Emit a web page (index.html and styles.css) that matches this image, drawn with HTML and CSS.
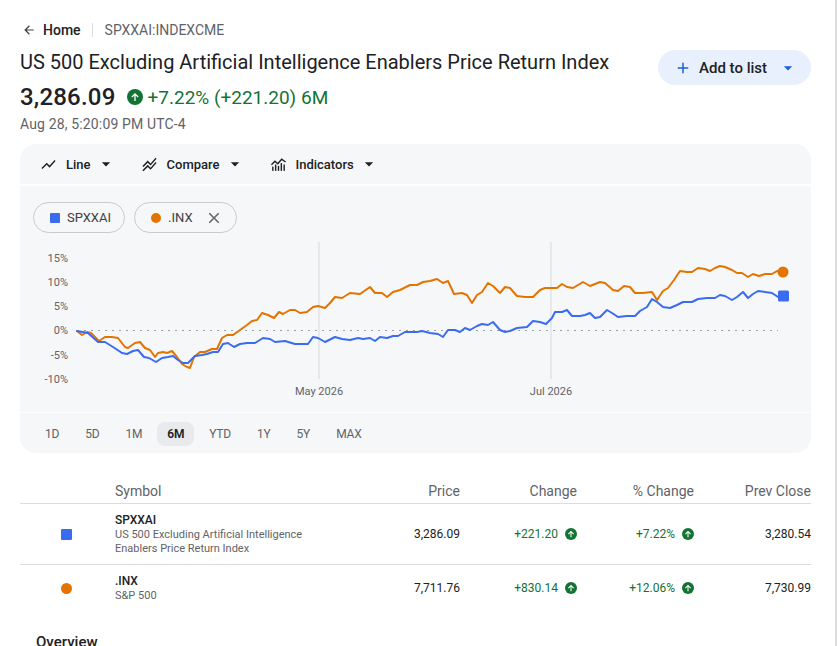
FILE: index.html
```html
<!DOCTYPE html>
<html lang="en">
<head>
<meta charset="utf-8">
<title>SPXXAI:INDEXCME</title>
<link rel="stylesheet" href="styles.css">
</head>
<body>
<div class="page">
  <nav class="crumbs">
    <svg class="crumb-back" viewBox="0 0 24 24" width="14" height="14"><path d="M20 11H7.83l5.59-5.59L12 4l-8 8 8 8 1.41-1.41L7.83 13H20v-2z"/></svg>
    <span class="crumb-home">Home</span>
    <span class="crumb-sep"></span>
    <span class="crumb-ticker">SPXXAI:INDEXCME</span>
  </nav>

  <header class="head">
    <div class="head-main">
      <h1 class="title">US 500 Excluding Artificial Intelligence Enablers Price Return Index</h1>
      <div class="quote">
        <span class="price">3,286.09</span>
        <span class="delta">
          <svg class="up-big" viewBox="0 0 16 16" width="16" height="16"><circle cx="8" cy="8" r="8" fill="#137333"/><path d="M8 4l3.6 3.6-.9.9L8.65 6.45V12h-1.3V6.45L5.3 8.5l-.9-.9z" fill="#fff"/></svg>
          +7.22% (+221.20) 6M
        </span>
      </div>
      <div class="stamp">Aug 28, 5:20:09 PM UTC-4</div>
    </div>
    <button class="add-btn">
      <svg viewBox="0 0 24 24" width="18" height="18"><path d="M19 13h-6v6h-2v-6H5v-2h6V5h2v6h6v2z" fill="#1a5fd6"/></svg>
      <span>Add to list</span>
      <svg viewBox="0 0 24 24" width="20" height="20"><path d="M7 10l5 5 5-5z" fill="#1a5fd6"/></svg>
    </button>
  </header>

  <section class="chart-card">
    <div class="toolbar">
      <div class="tool">
        <svg viewBox="0 0 24 24" width="17" height="17"><path d="M3.5 18.49l6-6.01 4 4L22 6.92l-1.41-1.41-7.09 7.97-4-4L2 16.99z"/></svg>
        <span>Line</span>
        <svg class="caret" viewBox="0 0 24 24" width="20" height="20"><path d="M7 10l5 5 5-5z"/></svg>
      </div>
      <div class="tool">
        <svg viewBox="0 0 24 24" width="17" height="17"><path d="M2 19.99l7.5-7.51 4 4 7.09-7.97L22 9.92l-8.5 9.56-4-4-6 6.01L2 19.99zM3.5 15.49l6-6.01 4 4L22 3.92l-1.41-1.41-7.09 7.97-4-4L2 13.99l1.5 1.5z"/></svg>
        <span>Compare</span>
        <svg class="caret" viewBox="0 0 24 24" width="20" height="20"><path d="M7 10l5 5 5-5z"/></svg>
      </div>
      <div class="tool">
        <svg viewBox="0 0 24 24" width="17" height="17"><path d="M2 12.5l5-5 4 3.5 5.5-6.5 5.5 4" fill="none" stroke="#202124" stroke-width="2"/><rect x="3" y="15" width="2" height="6"/><rect x="7" y="12" width="2" height="9"/><rect x="11" y="14" width="2" height="7"/><rect x="15" y="10" width="2" height="11"/><rect x="19" y="12" width="2" height="9"/></svg>
        <span>Indicators</span>
        <svg class="caret" viewBox="0 0 24 24" width="20" height="20"><path d="M7 10l5 5 5-5z"/></svg>
      </div>
    </div>

    <div class="plot">
      <div class="chips">
        <div class="chip"><span class="sw-square"></span><span>SPXXAI</span></div>
        <div class="chip"><span class="sw-dot"></span><span>.INX</span>
          <svg class="chip-x" viewBox="0 0 24 24" width="18" height="18"><path d="M19 6.41L17.59 5 12 10.59 6.41 5 5 6.41 10.59 12 5 17.59 6.41 19 12 13.41 17.59 19 19 17.59 13.41 12z"/></svg>
        </div>
      </div>
      <svg class="graph" viewBox="20 233 791 179" width="791" height="179">
        <g class="ylab">
          <text x="68" y="262">15%</text>
          <text x="68" y="286">10%</text>
          <text x="68" y="310">5%</text>
          <text x="68" y="334">0%</text>
          <text x="68" y="359">-5%</text>
          <text x="68" y="383">-10%</text>
        </g>
        <line x1="319" y1="242" x2="319" y2="379" class="vgrid"/>
        <line x1="551" y1="242" x2="551" y2="379" class="vgrid"/>
        <g class="xlab">
          <text x="319" y="395">May 2026</text>
          <text x="551" y="395">Jul 2026</text>
        </g>
        <line x1="77" y1="330.5" x2="778" y2="330.5" class="zero"/>
        <polyline class="ln-orange" points="77,331 82,335 87,332 91,333 99,341 105,337 112,337 118,338 125,347 128,348 135,343 140,342 145,348 150,350 155,357 158,353 163,352 167,353 172,351 177,357 182,364 187,367 190,368 194,357 200,352 205,352 212,349 217,349 222,338 227,335 233,335 240,330 247,325 252,321 257,320 262,313 268,315 274,318 279,312 283,314 290,310 295,310 300,313 307,312 313,307 318,306 325,308 330,303 335,297 342,298 350,293 360,294 370,287 375,293 382,293 387,297 393,292 400,290 410,285 417,285 423,282 430,281 437,279 443,283 448,281 454,294 462,293 467,295 472,303 477,295 482,292 488,283 493,286 500,293 505,287 510,288 517,296 525,297 533,297 540,290 545,288 552,288 557,288 562,284 567,287 573,288 583,282 590,286 600,282 605,283 613,290 618,291 624,286 630,287 635,293 643,293 652,292 657,300 663,291 668,288 674,280 680,271 687,272 692,272 698,268 705,269 710,271 715,268 720,266 725,267 732,270 737,273 742,273 748,277 753,274 759,276 765,274 772,274 777,271 783,272"/>
        <polyline class="ln-blue" points="77,331 88,333 98,342 105,342 113,347 122,353 127,354 133,351 138,350 144,357 149,358 156,362 162,358 168,357 173,356 178,360 183,363 188,363 195,356 202,355 207,354 213,352 218,352 223,344 228,343 234,347 240,344 247,343 255,343 263,338 270,339 275,342 285,341 295,344 308,344 313,337 318,338 325,342 335,337 342,339 350,340 358,338 363,339 370,338 375,341 380,337 387,338 393,336 398,336 405,332 417,332 422,331 430,333 438,334 443,337 448,330 455,330 460,332 465,328 470,330 477,326 482,324 488,325 493,322 500,330 505,332 510,331 517,328 527,327 533,321 540,322 546,324 552,318 555,312 562,312 567,310 572,316 580,316 585,315 590,313 595,318 600,317 607,310 612,313 618,317 627,316 635,316 640,311 647,307 652,299 657,302 663,307 670,308 677,305 683,302 692,302 698,299 707,298 715,298 720,295 725,296 732,300 737,297 743,292 748,298 753,294 758,291 765,292 772,293 778,297 783,296"/>
        <circle cx="783" cy="272" r="5.5" fill="#e37400"/>
        <rect x="778" y="290.5" width="11" height="11" rx="1.5" fill="#3b6cf0"/>
      </svg>
    </div>

    <div class="ranges">
      <span class="range">1D</span>
      <span class="range">5D</span>
      <span class="range">1M</span>
      <span class="range is-on">6M</span>
      <span class="range">YTD</span>
      <span class="range">1Y</span>
      <span class="range">5Y</span>
      <span class="range">MAX</span>
    </div>
  </section>

  <section class="table">
    <div class="trow thead">
      <div></div>
      <div class="c-sym">Symbol</div>
      <div class="c-num">Price</div>
      <div class="c-num">Change</div>
      <div class="c-num">% Change</div>
      <div class="c-num">Prev Close</div>
    </div>
    <div class="trow tbody">
      <div class="c-sw"><span class="tsw-square"></span></div>
      <div class="c-sym">
        <div class="sym-name">SPXXAI</div>
        <div class="sym-desc">US 500 Excluding Artificial Intelligence Enablers Price Return Index</div>
      </div>
      <div class="c-num">3,286.09</div>
      <div class="c-num pos">+221.20 <svg class="up" viewBox="0 0 16 16" width="12" height="12"><circle cx="8" cy="8" r="8" fill="#137333"/><path d="M8 3.6l4 4-1 1-2.3-2.3V12.4H7.3V6.3L5 8.6l-1-1z" fill="#fff"/></svg></div>
      <div class="c-num pos">+7.22% <svg class="up" viewBox="0 0 16 16" width="12" height="12"><circle cx="8" cy="8" r="8" fill="#137333"/><path d="M8 3.6l4 4-1 1-2.3-2.3V12.4H7.3V6.3L5 8.6l-1-1z" fill="#fff"/></svg></div>
      <div class="c-num">3,280.54</div>
    </div>
    <div class="trow tbody last">
      <div class="c-sw"><span class="tsw-dot"></span></div>
      <div class="c-sym">
        <div class="sym-name">.INX</div>
        <div class="sym-desc">S&amp;P 500</div>
      </div>
      <div class="c-num">7,711.76</div>
      <div class="c-num pos">+830.14 <svg class="up" viewBox="0 0 16 16" width="12" height="12"><circle cx="8" cy="8" r="8" fill="#137333"/><path d="M8 3.6l4 4-1 1-2.3-2.3V12.4H7.3V6.3L5 8.6l-1-1z" fill="#fff"/></svg></div>
      <div class="c-num pos">+12.06% <svg class="up" viewBox="0 0 16 16" width="12" height="12"><circle cx="8" cy="8" r="8" fill="#137333"/><path d="M8 3.6l4 4-1 1-2.3-2.3V12.4H7.3V6.3L5 8.6l-1-1z" fill="#fff"/></svg></div>
      <div class="c-num">7,730.99</div>
    </div>
  </section>

  <h2 class="overview">Overview</h2>
</div>
</body>
</html>
```

FILE: styles.css
```css
* { box-sizing: border-box; }
html, body { margin: 0; padding: 0; background: #fff; }
body {
  font-family: Roboto, "Liberation Sans", Arial, sans-serif;
  color: #202124;
  overflow: hidden;
  height: 646px;
}
.page {
  width: 837px;
  min-height: 646px;
  border-right: 2px solid #dadce0;
  padding: 20px 24px 0 20px;
}

/* breadcrumb */
.crumbs {
  display: flex;
  align-items: center;
  height: 20px;
  font-size: 14px;
  line-height: 20px;
}
.crumb-back { fill: #3c4043; margin-left: 2px; margin-right: 7px; }
.crumb-home { font-weight: 500; color: #202124; }
.crumb-sep {
  width: 1px; height: 14px; background: #dadce0;
  margin: 0 12px 0 11px;
}
.crumb-ticker { color: #5f6368; }

/* header */
.head {
  display: flex;
  justify-content: space-between;
  align-items: flex-start;
  margin-top: 8px;
}
.title {
  margin: 0;
  font-size: 20px;
  line-height: 28px;
  font-weight: 400;
  color: #202124;
}
.quote {
  display: flex;
  align-items: center;
  margin-top: 6px;
  height: 30px;
}
.price { font-size: 24px; font-weight: 500; letter-spacing: 0.2px; }
.delta {
  display: flex; align-items: center; gap: 4px;
  margin-left: 12px;
  font-size: 19px;
  color: #137333;
}
.stamp {
  margin-top: 3px;
  font-size: 14px;
  line-height: 18px;
  letter-spacing: 0.15px;
  color: #5f6368;
}
.add-btn {
  display: flex;
  align-items: center;
  margin-top: 2px;
  height: 35px;
  width: 153px;
  padding: 0 0 0 16px;
  border: none;
  border-radius: 18px;
  background: #e8effd;
  font-family: inherit;
  font-size: 15px;
  font-weight: 500;
  color: #202124;
}
.add-btn span { margin: 0 11px 0 7px; }

/* chart card */
.chart-card { margin-top: 11px; }
.toolbar {
  display: flex;
  align-items: center;
  gap: 25px;
  height: 40px;
  padding-left: 20px;
  background: #f6f7f9;
  border-radius: 16px 16px 0 0;
}
.tool {
  display: flex;
  align-items: center;
  font-size: 13px;
  font-weight: 500;
  color: #202124;
}
.tool svg { fill: #202124; }
.tool span { margin-left: 9px; margin-right: 5px; }
.plot {
  margin-top: 2px;
  background: #f6f7f9;
  padding-top: 16px;
}
.chips {
  display: flex;
  gap: 9px;
  padding-left: 13px;
  height: 31px;
}
.chip {
  display: flex;
  align-items: center;
  height: 31px;
  padding: 0 13px 0 16px;
  border: 1px solid #c8cacf;
  border-radius: 16px;
  font-size: 13px;
  color: #3c4043;
}
.sw-square { width: 10px; height: 10px; background: #3b6cf0; border-radius: 1px; margin-right: 7px; }
.sw-dot { width: 10px; height: 10px; background: #e37400; border-radius: 50%; margin-right: 7px; }
.chip-x { fill: #5f6368; margin-left: 12px; }
.graph { display: block; }
.ylab text { font-size: 11px; fill: #5f6368; text-anchor: end; font-family: Roboto, sans-serif; }
.xlab text { font-size: 11px; fill: #5f6368; text-anchor: middle; font-family: Roboto, sans-serif; }
.vgrid { stroke: #e1e3e6; stroke-width: 1.5; }
.zero { stroke: #9aa0a6; stroke-width: 1; stroke-dasharray: 2 5; }
.ln-orange, .ln-blue { fill: none; stroke-width: 2; stroke-linejoin: round; stroke-linecap: round; }
.ln-orange { stroke: #e37400; }
.ln-blue { stroke: #3b6cf0; }

.ranges {
  display: flex;
  align-items: center;
  gap: 4px;
  height: 40px;
  margin-top: 1px;
  padding-left: 14px;
  padding-top: 1px;
  background: #f6f7f9;
  border-radius: 0 0 16px 16px;
}
.range {
  display: flex;
  align-items: center;
  justify-content: center;
  height: 24px;
  padding: 0 11px;
  border-radius: 8px;
  font-size: 12px;
  letter-spacing: -0.2px;
  color: #5f6368;
}
.range.is-on { background: #e8eaed; color: #202124; font-weight: 600; padding: 0 10px; }

/* table */
.table { margin-top: 18px; }
.trow {
  display: grid;
  grid-template-columns: 95px 230px 115px 117px 117px 117px;
  align-items: center;
}
.thead {
  height: 33px;
  padding-top: 7px;
  border-bottom: 1px solid #dadce0;
  font-size: 14px;
  color: #5f6368;
}
.tbody {
  padding: 8px 0 8px;
  border-bottom: 1px solid #dadce0;
  font-size: 12px;
}
.tbody.last { border-bottom: none; }
.c-num { display: flex; justify-content: flex-end; align-items: center; gap: 7px; }
.c-sw { display: flex; justify-content: center; padding-right: 2px; }
.tsw-square { width: 11px; height: 11px; background: #3b6cf0; border-radius: 1px; }
.tsw-dot { width: 11px; height: 11px; background: #e37400; border-radius: 50%; }
.sym-name { font-size: 12px; line-height: 16px; font-weight: 500; color: #202124; }
.sym-desc { font-size: 11px; line-height: 14px; color: #5f6368; max-width: 200px; }
.pos { color: #137333; }
.up { flex: none; }
.overview {
  margin: 21px 0 0 16px;
  font-size: 15px;
  line-height: 20px;
  font-weight: 500;
  color: #202124;
}
```
